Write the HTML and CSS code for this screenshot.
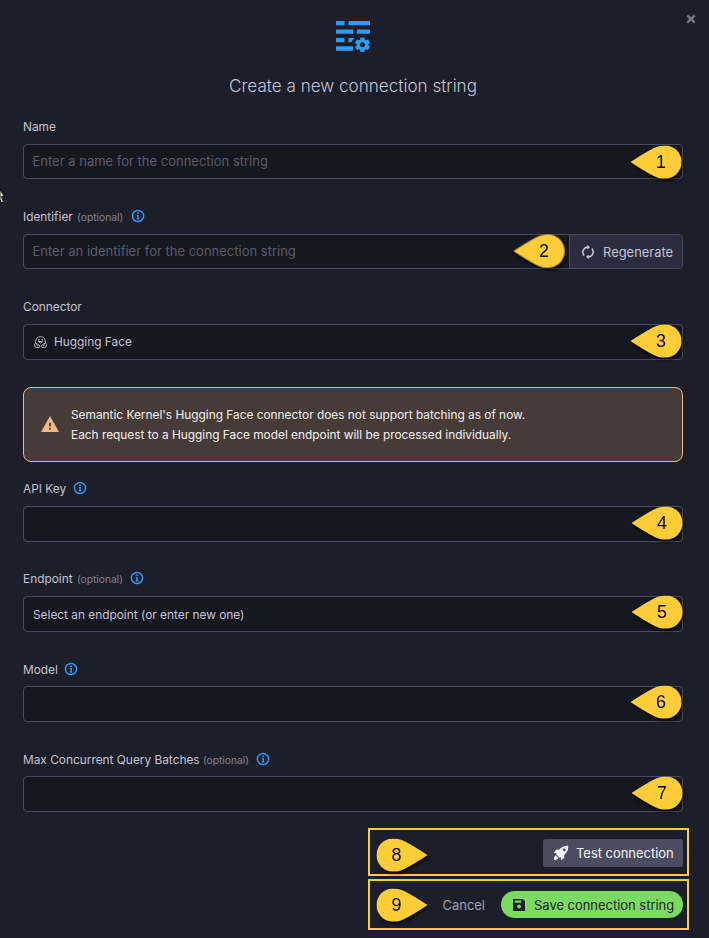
FILE: index.html
```html
<!DOCTYPE html>
<html lang="en">
<head>
<meta charset="utf-8">
<title>Create a new connection string</title>
<link rel="stylesheet" href="styles.css">
</head>
<body>
<svg class="defs" width="0" height="0" aria-hidden="true">
  <defs>
    <filter id="shadow" x="-20%" y="-20%" width="150%" height="160%"><feDropShadow dx="1.5" dy="2.5" stdDeviation="1.8" flood-color="#000" flood-opacity=".65"/></filter>
    <symbol id="info" viewBox="0 0 14 14"><circle cx="7" cy="7" r="5.6" fill="none" stroke="#2f9bf4" stroke-width="1.5"/><path d="M6.2 3.6h1.6v1.5H6.2zM5.700 6h2.100v3.400h.6v1H5.600v-1h.7V7h-.6z" fill="#2f9bf4"/></symbol>
    <symbol id="drop" viewBox="0 0 51 33"><path d="M0 16.500C7 12 16 6.500 23 2.800C27 .8 30 0 34.500 0A16.250 16.250 0 0 1 34.500 33C30 33 27 32.200 23 30.200C16 26.500 7 21 0 16.500Z" fill="#ffcd38"/></symbol>
  </defs>
</svg>
<main class="dialog">
  <button class="close" aria-label="Close"><svg width="10" height="10" viewBox="0 0 10 10"><path d="M1.300 1.300 8.700 8.700M8.700 1.300 1.300 8.700" stroke="#777885" stroke-width="2.500"/></svg></button>
  <header class="header">
    <svg width="36" height="32" viewBox="0 0 36 32" fill="#2f9bf4">
      <path d="M1 1h8.500v4.300H1zM13.500 1H35v4.300H13.500zM1 9.500h17v4.300H1zM22 9.500h13v4.300H22zM1 18h8.500v4.200H1zM13.500 18h6.200l-2.200 2.200-1 2h-3zM1 26.300h17v4.500H1z"/>
      <path fill-rule="evenodd" d="M25.600 17.400h3.800l.5 2.200 1 .6 2.200-.7 1.900 3.200-1.700 1.500v1.100l1.700 1.500-1.900 3.200-2.200-.7-1 .6-.5 2.100h-3.800l-.5-2.100-1-.6-2.200.7-1.900-3.200 1.700-1.500v-1.100L20 22.700l1.900-3.200 2.200.7 1-.6zM27.500 22.300a2.500 2.500 0 1 0 0 5 2.500 2.500 0 0 0 0-5z"/>
    </svg>
    <h1 class="title">Create a new connection string</h1>
  </header>

  <form class="form">
    <div class="field">
      <label class="label">Name</label>
      <div class="control short"><span class="placeholder">Enter a name for the connection string</span></div>
    </div>
    <div class="field">
      <label class="label">Identifier <small class="spaced">(optional)</small><svg class="info"><use href="#info"/></svg></label>
      <div class="control short group"><span class="placeholder">Enter an identifier for the connection string</span>
        <button type="button" class="regenerate"><svg width="14" height="14" viewBox="0 0 14 14" fill="none" stroke="#cfcfdc" stroke-width="1.400"><path d="M3.200 10.400A4.900 4.900 0 0 1 6.300 2.200H8M10.800 3.600A4.900 4.900 0 0 1 7.700 11.800H6"/><path d="M6.300 0 9 2.200 6.300 4.400zM7.700 9.600 5 11.800 7.700 14z" fill="#cfcfdc" stroke="none"/></svg>Regenerate</button>
      </div>
    </div>
    <div class="field connector">
      <label class="label">Connector</label>
      <div class="control"><svg class="face" width="13" height="12" viewBox="0 0 13 12" fill="none" stroke="#bcbcca" stroke-width=".9"><path d="M1.600 7V5.500A4.900 4.900 0 0 1 11.400 5.500V7M4.400 5.600Q6.500 8.400 8.600 5.600zM1.500 7 5.500 9.300Q6.500 11 5 11.400H2Q.2 10.800.7 8.400zM11.500 7 7.500 9.300Q6.500 11 8 11.400H11Q12.800 10.800 12.300 8.400zM2.200 8.600l1.700 1.400M10.800 8.600 9.100 10"/><path d="M4.600 3.200v1.400M8.400 3.200v1.400" stroke-width="1.300"/></svg><span>Hugging Face</span></div>
    </div>
    <div class="alert">
      <svg width="18" height="16" viewBox="0 0 18 16"><path d="M9 0 18 16H0z" fill="#edb984"/><path d="M8.100 6.700h1.800v3.600H8.100zM8.100 11.700h1.800v1.800H8.100z" fill="#463b36"/></svg>
      <p>Semantic Kernel's Hugging Face connector does not support batching as of now.<br>Each request to a Hugging Face model endpoint will be processed individually.</p>
    </div>
    <div class="field">
      <label class="label">API Key<svg class="info"><use href="#info"/></svg></label>
      <div class="control"></div>
    </div>
    <div class="field">
      <label class="label">Endpoint <small class="spaced">(optional)</small><svg class="info"><use href="#info"/></svg></label>
      <div class="control select"><span>Select an endpoint (or enter new one)</span></div>
    </div>
    <div class="field">
      <label class="label low">Model<svg class="info"><use href="#info"/></svg></label>
      <div class="control"></div>
    </div>
    <div class="field last">
      <label class="label low">Max Concurrent Query Batches <small>(optional)</small><svg class="info"><use href="#info"/></svg></label>
      <div class="control"></div>
    </div>
  </form>

  <div class="actions test-row">
    <button class="test"><svg width="16" height="16" viewBox="0 0 16 16"><path fill="#f4f4fa" fill-rule="evenodd" d="M15.200.8C11.500.5 8.600 1.700 6.500 4.500L3 4.800.8 8l3 .3L3.200 9.500 6.500 12.800 7.700 12.200 8 15.200 11.200 13 11.500 9.500C14.300 7.400 15.500 4.500 15.200.8zM11.200 3.400a1.400 1.400 0 1 1 0 2.800 1.400 1.400 0 0 1 0-2.800zM2.700 10.300 5.700 13.300Q4.500 15.200.9 15.100.8 11.600 2.700 10.300z"/></svg>Test connection</button>
  </div>
  <div class="actions save-row">
    <button class="cancel">Cancel</button>
    <button class="save"><svg width="12" height="12" viewBox="0 0 12 12"><path fill="#1b1d29" fill-rule="evenodd" d="M0 0h9.700L12 2.300V12H0zM1.700 1.600v2.100h6.500V1.600zM6 5.500a2 2 0 1 0 0 4 2 2 0 0 0 0-4z"/></svg>Save connection string</button>
  </div>

  <svg class="markers" width="709" height="938" viewBox="0 0 709 938">
    <g filter="url(#shadow)">
      <use href="#drop" x="630.500" y="145.500" width="51" height="33"/>
      <use href="#drop" x="513.500" y="234.500" width="51" height="33"/>
      <use href="#drop" x="630.500" y="324.500" width="51" height="33"/>
      <use href="#drop" x="631.500" y="506.500" width="51" height="33"/>
      <use href="#drop" x="631.500" y="595.500" width="51" height="33"/>
      <use href="#drop" x="630.500" y="685.500" width="51" height="33"/>
      <use href="#drop" x="631.500" y="776.500" width="51" height="33"/>
      <use href="#drop" width="51" height="33" transform="translate(427.500 838.500) scale(-1 1)"/>
      <use href="#drop" width="51" height="33" transform="translate(427.500 888.500) scale(-1 1)"/>
    </g>
    <g class="numbers">
      <text x="661" y="168">1</text><text x="544" y="257">2</text><text x="661" y="347">3</text>
      <text x="662" y="529">4</text><text x="662" y="618">5</text><text x="661" y="708">6</text>
      <text x="662" y="799">7</text><text x="396.500" y="861">8</text><text x="396.500" y="911">9</text>
    </g>
  </svg>
  <svg class="cursor" width="6" height="17" viewBox="0 0 6 17"><path d="M-5-7 4.500 7.500H1.500L3.500 13 1.500 14 0 10.500V2" fill="#fff" stroke="#000"/></svg>
</main>
</body>
</html>
```
FILE: styles.css
```css
* { box-sizing: border-box; }
body {
  margin: 0;
  background: #1c1e2a;
  color: #c4c4d1;
  font: 11.87px/20px Inter, "Liberation Sans", sans-serif;
}
button { border: 0; padding: 0; background: none; color: inherit; font: inherit; font-size: 12.95px; }
svg { flex: none; }
.defs { position: absolute; }
.dialog { position: relative; width: 709px; height: 938px; overflow: hidden; padding: 20px 26px 0 23px; }
.close { position: absolute; right: 13px; top: 14px; width: 10px; height: 10px; line-height: 0; }
.header { display: flex; flex-direction: column; align-items: center; height: 97px; }
.title { margin: 22px 0 0; font-size: 17.1px; line-height: 24px; font-weight: 300; color: #c5c5d5; }
.field { height: 90px; }
.label { display: flex; align-items: center; height: 20px; margin-bottom: 7px; white-space: pre; }
.label.low { padding-top: 2px; }
.low .info { margin-top: -3px; }
small { font-size: 10.25px; color: #858593; }
.spaced { margin: 0 1px; }
.info { width: 14px; height: 14px; margin: -2px 0 0 6.5px; }
.control {
  display: flex;
  align-items: center;
  height: 36px;
  padding-left: 9px;
  border: 1px solid #4a4b5e;
  border-radius: 4px;
  background: #151721;
}
.control.short { height: 35px; }
.control.select { padding-top: 2px; }
.placeholder { margin: -2px 0 0 -.5px; font-size: 13px; color: #5b5c67; }
.face { margin: 0 7px 0 1px; }
.group { justify-content: space-between; }
.regenerate {
  display: flex;
  align-items: center;
  gap: 8px;
  width: 113px;
  height: 33px;
  padding-left: 11px;
  border-left: 1px solid #4a4b5e;
  border-radius: 0 3px 3px 0;
  background: #2b2c3d;
}
.connector { height: 63px; margin-bottom: 27px; }
.alert {
  display: flex;
  align-items: center;
  gap: 12px;
  height: 75px;
  margin-bottom: 17px;
  padding-left: 17px;
  border: 1px solid #edb984;
  border-radius: 8px;
  background: #463b36;
  color: #f3f1f1;
}
.alert svg { margin-top: -2px; }
.alert p { margin: 0; }
.last { height: 79px; }
.actions {
  display: flex;
  align-items: center;
  justify-content: flex-end;
  width: 321px;
  margin: 0 -6px 0 auto;
  padding-right: 4px;
  border: 2px solid #ffcd38;
}
.test-row { height: 48px; padding-top: 2px; }
.save-row { height: 51px; margin-top: 3px; }
.test {
  display: flex;
  align-items: center;
  gap: 7px;
  width: 140px;
  height: 28px;
  padding-left: 10px;
  border-radius: 3px;
  background: #4b4c60;
  color: #f4f4fa;
}
.cancel { margin-right: 16px; color: #a0a1b3; }
.save {
  display: flex;
  align-items: center;
  gap: 9px;
  width: 182px;
  height: 27px;
  padding-left: 12px;
  border-radius: 14px;
  background: #7bdb60;
  color: #1b1d29;
}
.markers { position: absolute; left: 0; top: 0; pointer-events: none; }
.numbers { font: 18px "Liberation Sans", sans-serif; text-anchor: middle; fill: #000; }
.cursor { position: absolute; left: 0; top: 189px; }
```
